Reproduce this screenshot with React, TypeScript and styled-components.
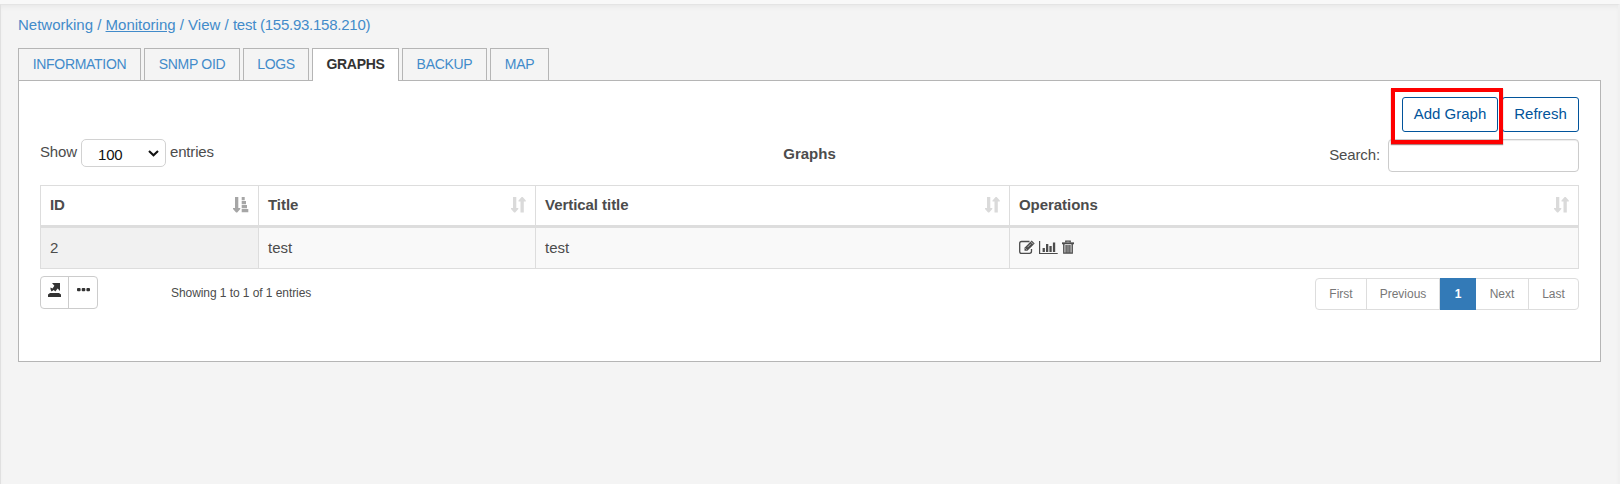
import React from "react";
import styled, { createGlobalStyle } from "styled-components";

const GlobalStyle = createGlobalStyle`
  * { box-sizing: border-box; }
  body {
    margin: 0;
    background: #f4f4f4;
    color: #4c4c4c;
    font-family: "Liberation Sans", Arial, sans-serif;
    font-size: 15px;
  }
`;

const Page = styled.div`
  height: 484px;
  padding-top: 4px;
  background: #f8f8f8;
  overflow: hidden;
`;

const Main = styled.main`
  height: 480px;
  padding: 10px 18px 0 17px;
  background: #f4f4f4;
  border-top: 1px solid #e4e4e4;
  border-left: 1px solid #e0e0e0;
  border-right: 2px solid #f0f0f0;
  box-shadow: inset 0 4px 5px -2px rgba(0, 0, 0, 0.05);
`;

const Breadcrumb = styled.nav`
  height: 33px;
  line-height: 20px;
  color: #428bca;
  white-space: nowrap;
`;

const Crumb = styled.a<{ $underlined?: boolean; $tight?: boolean }>`
  color: inherit;
  letter-spacing: ${(p) => (p.$tight ? "-0.25px" : "0")};
  text-decoration: ${(p) => (p.$underlined ? "underline" : "none")};
`;

const Tabs = styled.div`
  display: flex;
  gap: 3px;
  position: relative;
`;

const Tab = styled.button<{ $width: number; $active?: boolean }>`
  width: ${(p) => p.$width}px;
  height: ${(p) => (p.$active ? 33 : 32)}px;
  margin-bottom: ${(p) => (p.$active ? -1 : 0)}px;
  padding: 0 0 ${(p) => (p.$active ? 1 : 0)}px;
  border: 1px solid #b5b5b5;
  border-bottom: 0;
  background: ${(p) => (p.$active ? "#fff" : "#f4f4f4")};
  color: ${(p) => (p.$active ? "#333" : "#428bca")};
  font: ${(p) => (p.$active ? "bold" : "normal")} 14px/31px "Liberation Sans", Arial, sans-serif;
  letter-spacing: -0.3px;
  white-space: nowrap;
`;

const Panel = styled.section`
  width: 1583px;
  height: 282px;
  padding: 16px 21px;
  border: 1px solid #b5b5b5;
  background: #fff;
`;

const Actions = styled.div`
  display: flex;
  justify-content: flex-end;
  gap: 4px;
  height: 42px;
`;

const ActionSlot = styled.div`
  position: relative;
`;

const ActionButton = styled.button<{ $width: number }>`
  width: ${(p) => p.$width}px;
  height: 35px;
  padding: 0 0 2px;
  border: 1px solid #01549b;
  border-radius: 3px;
  background: #fff;
  color: #01549b;
  font: 15px "Liberation Sans", Arial, sans-serif;
  white-space: nowrap;
`;

const Highlight = styled.div`
  position: absolute;
  left: -11px;
  top: -9px;
  width: 112px;
  height: 56px;
  border: 4px solid #fe0000;
  box-shadow: 0 1px 1px rgba(90, 0, 0, 0.5);
`;

const Controls = styled.div`
  display: grid;
  grid-template-columns: 1fr auto 1fr;
  height: 46px;
`;

const Length = styled.label`
  display: flex;
  gap: 4px;
  line-height: 26px;
  letter-spacing: -0.15px;
`;

const SelectBox = styled.span`
  display: flex;
  align-items: center;
  justify-content: space-between;
  width: 85px;
  height: 28px;
  padding: 3px 6px 0 16px;
  border: 1px solid #d2d2d2;
  border-radius: 5px;
  color: #111;
`;

const Caption = styled.strong`
  line-height: 30px;
`;

const Search = styled.label`
  display: flex;
  justify-content: flex-end;
  gap: 8px;
  line-height: 32px;
  letter-spacing: -0.12px;
`;

const SearchInput = styled.input`
  width: 191px;
  height: 33px;
  border: 1px solid #ccc;
  border-radius: 4px;
  background: #fff;
  box-shadow: inset 0 1px 1px rgba(0, 0, 0, 0.075);
`;

const Table = styled.div`
  border: 1px solid #ddd;
`;

const Row = styled.div<{ $head?: boolean }>`
  display: grid;
  grid-template-columns: 218px 277px 474px 1fr;
  height: ${(p) => (p.$head ? 42 : 40)}px;
  border-bottom: ${(p) => (p.$head ? "3px solid #ddd" : "0")};
  background: ${(p) => (p.$head ? "#fff" : "#f9f9f9")};
  font-weight: ${(p) => (p.$head ? "bold" : "normal")};
  letter-spacing: ${(p) => (p.$head ? "-0.05px" : "0")};
`;

const Cell = styled.div<{ $sorted?: boolean }>`
  display: flex;
  align-items: center;
  justify-content: space-between;
  padding: 0 9px 2px;
  border-right: 1px solid #ddd;
  background: ${(p) => (p.$sorted ? "#f1f1f1" : "transparent")};
  &:last-child { border-right: 0; }
`;

const Operations = styled.span`
  display: flex;
  gap: 4px;
  color: #4c4c4c;
`;

const Footer = styled.div`
  display: flex;
  padding-top: 7px;
`;

const ToolGroup = styled.div`
  display: flex;
  width: 58px;
  height: 33px;
  border: 1px solid #ccc;
  border-radius: 4px;
  color: #333;
`;

const ToolButton = styled.button`
  width: 27px;
  padding: 6px 0 0;
  display: flex;
  justify-content: center;
  border: 0;
  background: none;
  color: inherit;
  & + & {
    width: 29px;
    padding-left: 1px;
    border-left: 1px solid #ccc;
  }
`;

const Info = styled.div`
  flex: 1;
  padding-left: 73px;
  font-size: 12px;
  line-height: 35px;
  letter-spacing: -0.07px;
`;

const Pager = styled.div`
  display: flex;
  margin-top: 2px;
  height: 32px;
  border: 1px solid #ddd;
  border-radius: 4px;
`;

const PageButton = styled.button<{ $width: number; $active?: boolean }>`
  width: ${(p) => p.$width}px;
  margin: ${(p) => (p.$active ? "-1px 0" : "0")};
  padding: 0;
  border: 0;
  border-right: ${(p) => (p.$active ? "0" : "1px solid #ddd")};
  background: ${(p) => (p.$active ? "#337ab7" : "none")};
  color: ${(p) => (p.$active ? "#fff" : "#777")};
  font: ${(p) => (p.$active ? "bold" : "normal")} 12px "Liberation Sans", Arial, sans-serif;
  &:last-child { border-right: 0; }
`;

const SortIcon = () => (
  <svg width="15" height="16" viewBox="0 0 15 16" fill="#dadada">
    <path d="M2 0h3.300v11h2v1L4.200 15.500H3.100L0 12v-1h2zM9.500 15.500h3.300V4.500h2v-1L11.700 0h-1.100L7.500 3.500v1h2z" />
  </svg>
);

const SortedIcon = () => (
  <svg width="16" height="16" viewBox="0 0 16 16" fill="#a6a6a6">
    <path d="M2 0h3.300v11h2v1L4.200 15.500H3.100L0 12v-1h2zM8.700 0h3v3.300h-3zM8.700 4h4.300v3.300H8.700zM8.700 8h5.300v3.300H8.700zM8.700 12h6.600v3.300H8.700z" />
  </svg>
);

const EditIcon = () => (
  <svg width="16" height="15" viewBox="0 0 16 15" fill="none" stroke="currentColor">
    <path d="M10.500 1.500h-8Q.7 1.500.7 3.400v8Q.7 13.300 2.500 13.300h8q2 0 2-2V9" strokeWidth="1.300" />
    <path d="M5.500 10.700V7.800L12.700.6l3 3L8.400 10.700z" fill="currentColor" stroke="none" />
    <path d="M6.400 8.400l1.300 1.300M8.500 7.200L12 3.700M11.800 1.600l2.700 2.700" stroke="#f9f9f9" strokeWidth=".6" />
  </svg>
);

const ChartIcon = () => (
  <svg width="19" height="15" viewBox="0 0 19 15" fill="currentColor">
    <path d="M0 1h1.200v11.900H18.700V14.100H0zM3.600 8h2.300v4H3.600zM7 4h2.300v8H7zM10.400 6h2.300v6h-2.300zM13.900 2.500h2.300V12h-2.300z" />
  </svg>
);

const TrashIcon = () => (
  <svg width="12" height="15" viewBox="0 0 12 15" fill="none" stroke="currentColor">
    <path d="M3.800 2.500V1.200h4.400v1.300" strokeWidth="1.300" />
    <path d="M0 3.300h12" strokeWidth="1.900" />
    <path d="M1.800 4v9.100h8.400V4M4.100 5v8M6 5v8M7.900 5v8" strokeWidth="1.400" />
  </svg>
);

const ExportIcon = () => (
  <svg width="13" height="15" viewBox="0 0 13 15" fill="currentColor">
    <path d="M4 0h8v8L9.600 5.600 7.300 8.500 5.800 7 3.500 8.500Q2 6 2.500 4.500L4.500 5.500 6.400 2.800zM2 10h9l2 1.500V14H0v-2.500z" />
  </svg>
);

const DotsIcon = () => (
  <svg width="13" height="15" viewBox="0 0 13 15" fill="currentColor">
    <rect x="0" y="5" width="3.6" height="3.2" rx="1" />
    <rect x="4.700" y="5" width="3.6" height="3.2" rx="1" />
    <rect x="9.400" y="5" width="3.6" height="3.2" rx="1" />
  </svg>
);

const Chevron = () => (
  <svg width="11" height="9" viewBox="0 0 11 9" fill="none" stroke="#111" strokeWidth="2.1">
    <path d="M1 1l4.500 4.300L10 1" />
  </svg>
);

const tabs = [
  { label: "INFORMATION", width: 123 },
  { label: "SNMP OID", width: 96 },
  { label: "LOGS", width: 66 },
  { label: "GRAPHS", width: 87, active: true },
  { label: "BACKUP", width: 85 },
  { label: "MAP", width: 59 },
];

const pages = [
  { label: "First", width: 51 },
  { label: "Previous", width: 73 },
  { label: "1", width: 36, active: true },
  { label: "Next", width: 53 },
  { label: "Last", width: 49 },
];

export default function App() {
  return (
    <Page>
      <GlobalStyle />
      <Main>
        <Breadcrumb>
          <Crumb>Networking</Crumb> / <Crumb $underlined>Monitoring</Crumb> / <Crumb>View</Crumb> /{" "}
          <Crumb $tight>test (155.93.158.210)</Crumb>
        </Breadcrumb>
        <Tabs>
          {tabs.map((t) => (
            <Tab key={t.label} $width={t.width} $active={t.active}>
              {t.label}
            </Tab>
          ))}
        </Tabs>
        <Panel>
          <Actions>
            <ActionSlot>
              <ActionButton $width={96}>Add Graph</ActionButton>
              <Highlight />
            </ActionSlot>
            <ActionButton $width={77}>Refresh</ActionButton>
          </Actions>
          <Controls>
            <Length>
              Show
              <SelectBox>
                100
                <Chevron />
              </SelectBox>
              entries
            </Length>
            <Caption>Graphs</Caption>
            <Search>
              Search:
              <SearchInput />
            </Search>
          </Controls>
          <Table>
            <Row $head>
              <Cell>ID<SortedIcon /></Cell>
              <Cell>Title<SortIcon /></Cell>
              <Cell>Vertical title<SortIcon /></Cell>
              <Cell>Operations<SortIcon /></Cell>
            </Row>
            <Row>
              <Cell $sorted>2</Cell>
              <Cell>test</Cell>
              <Cell>test</Cell>
              <Cell>
                <Operations>
                  <EditIcon />
                  <ChartIcon />
                  <TrashIcon />
                </Operations>
              </Cell>
            </Row>
          </Table>
          <Footer>
            <ToolGroup>
              <ToolButton><ExportIcon /></ToolButton>
              <ToolButton><DotsIcon /></ToolButton>
            </ToolGroup>
            <Info>Showing 1 to 1 of 1 entries</Info>
            <Pager>
              {pages.map((p) => (
                <PageButton key={p.label} $width={p.width} $active={p.active}>
                  {p.label}
                </PageButton>
              ))}
            </Pager>
          </Footer>
        </Panel>
      </Main>
    </Page>
  );
}
